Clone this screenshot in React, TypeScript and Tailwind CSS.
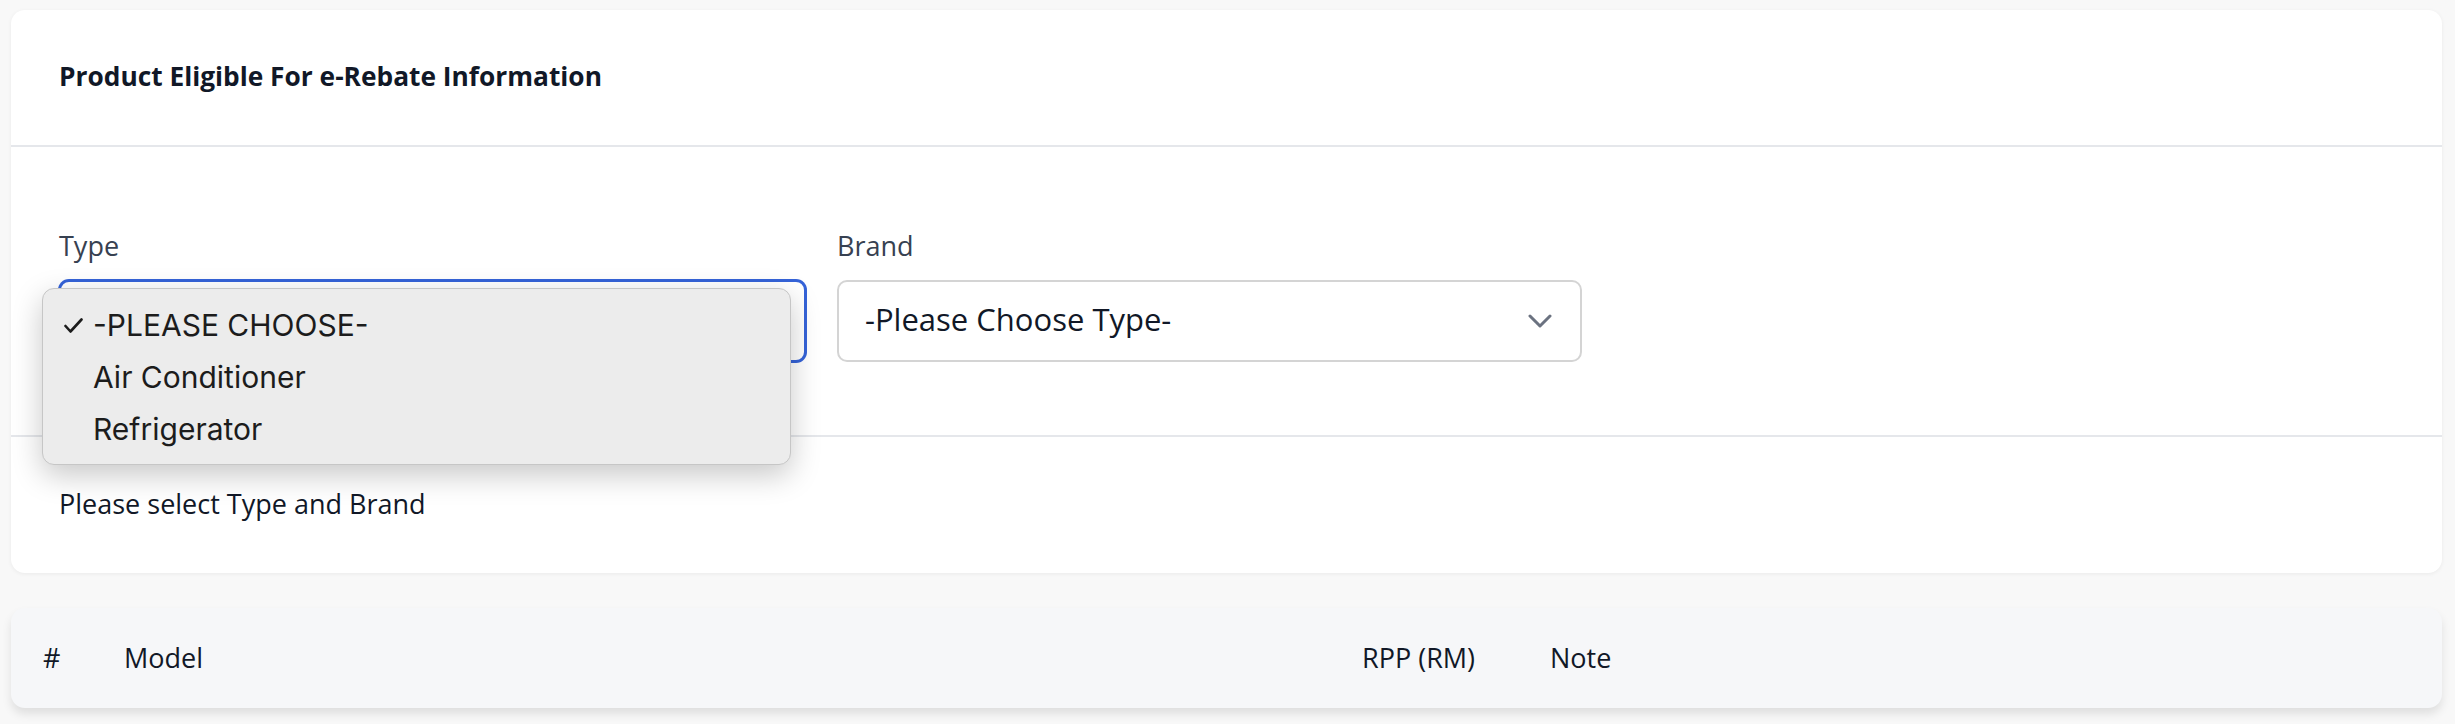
import React from 'react';

const TYPES = ['-PLEASE CHOOSE-', 'Air Conditioner', 'Refrigerator'];

const ChevronDown = () => (
  <svg width="24" height="14" viewBox="0 0 24 14" fill="none" className="shrink-0">
    <polyline points="2,2 12,12 22,2" stroke="#6b7280" strokeWidth="3" strokeLinecap="round" strokeLinejoin="round" />
  </svg>
);

const Check = () => (
  <svg width="19" height="15" viewBox="0 0 19 15" fill="none">
    <polyline points="1.5,8 6.5,13.5 17.5,1.5" stroke="#1c1c1c" strokeWidth="2.6" strokeLinecap="round" strokeLinejoin="round" />
  </svg>
);

export default function App() {
  return (
    <div className="min-h-[724px] bg-[#f8f8f8] pt-[10px] pl-[11px] pr-[13px] font-['Open_Sans','Noto_Sans',sans-serif] text-[#111827]">
      {/* filter card */}
      <div className="rounded-[14px] bg-white shadow-[0_1px_4px_rgba(0,0,0,0.06)]">
        <div className="px-[48px] pt-[48px] pb-[51px] border-b-2 border-[#e5e7eb]">
          <h2 className="text-[26.3px] leading-[36px] font-bold text-[#111827]">Product Eligible For e-Rebate Information</h2>
        </div>

        <div className="px-[48px] pt-[81px] pb-[73px] border-b-2 border-[#e5e7eb]">
          <div className="flex gap-[31px]">
            <div className="w-[747px]">
              <label className="block text-[27px] leading-[36px] text-[#374151] mb-[16px]">Type</label>
              <div className="relative">
                <div className="h-[82px] rounded-[10px] border-2 border-[#3563d8] ring-1 ring-[#3563d8] bg-white"></div>

                {/* native select popup */}
                <div className="absolute left-[-17px] top-[8px] w-[749px] rounded-[12px] border border-[#c6c6c6] bg-[#ececec] pt-[11px] pb-[9px] shadow-[0_10px_30px_rgba(0,0,0,0.22)] font-['Inter','Liberation_Sans',sans-serif] text-[30px] text-[#1c1c1c]">
                  {TYPES.map((t, i) => (
                    <div key={t} className="flex items-center h-[51.7px]">
                      <span className="w-[50px] pl-[21px] flex items-center">{i === 0 ? <Check /> : null}</span>
                      <span>{t}</span>
                    </div>
                  ))}
                </div>
              </div>
            </div>

            <div className="w-[745px]">
              <label className="block text-[27px] leading-[36px] text-[#374151] mb-[16px]">Brand</label>
              <div className="h-[82px] rounded-[10px] border-2 border-[#d4d4d4] bg-white flex items-center justify-between pl-[26px] pr-[28px]">
                <span className="text-[31px] leading-[42px] pb-[4px] text-[#111827]">-Please Choose Type-</span>
                <ChevronDown />
              </div>
            </div>
          </div>
        </div>

        <div className="px-[48px] pt-[49px] pb-[51px]">
          <p className="text-[27px] leading-[36px] text-[#111827]">Please select Type and Brand</p>
        </div>
      </div>

      {/* table header */}
      <div className="mt-[35px] h-[100px] rounded-[14px] bg-[#f6f7f9] shadow-[0_6px_10px_rgba(0,0,0,0.10)] flex items-center text-[27px] leading-[36px] text-[#111827]">
        <div className="w-[113px] pl-[32px]">#</div>
        <div className="w-[1238px]">Model</div>
        <div className="w-[188px]">RPP (RM)</div>
        <div>Note</div>
      </div>
    </div>
  );
}
